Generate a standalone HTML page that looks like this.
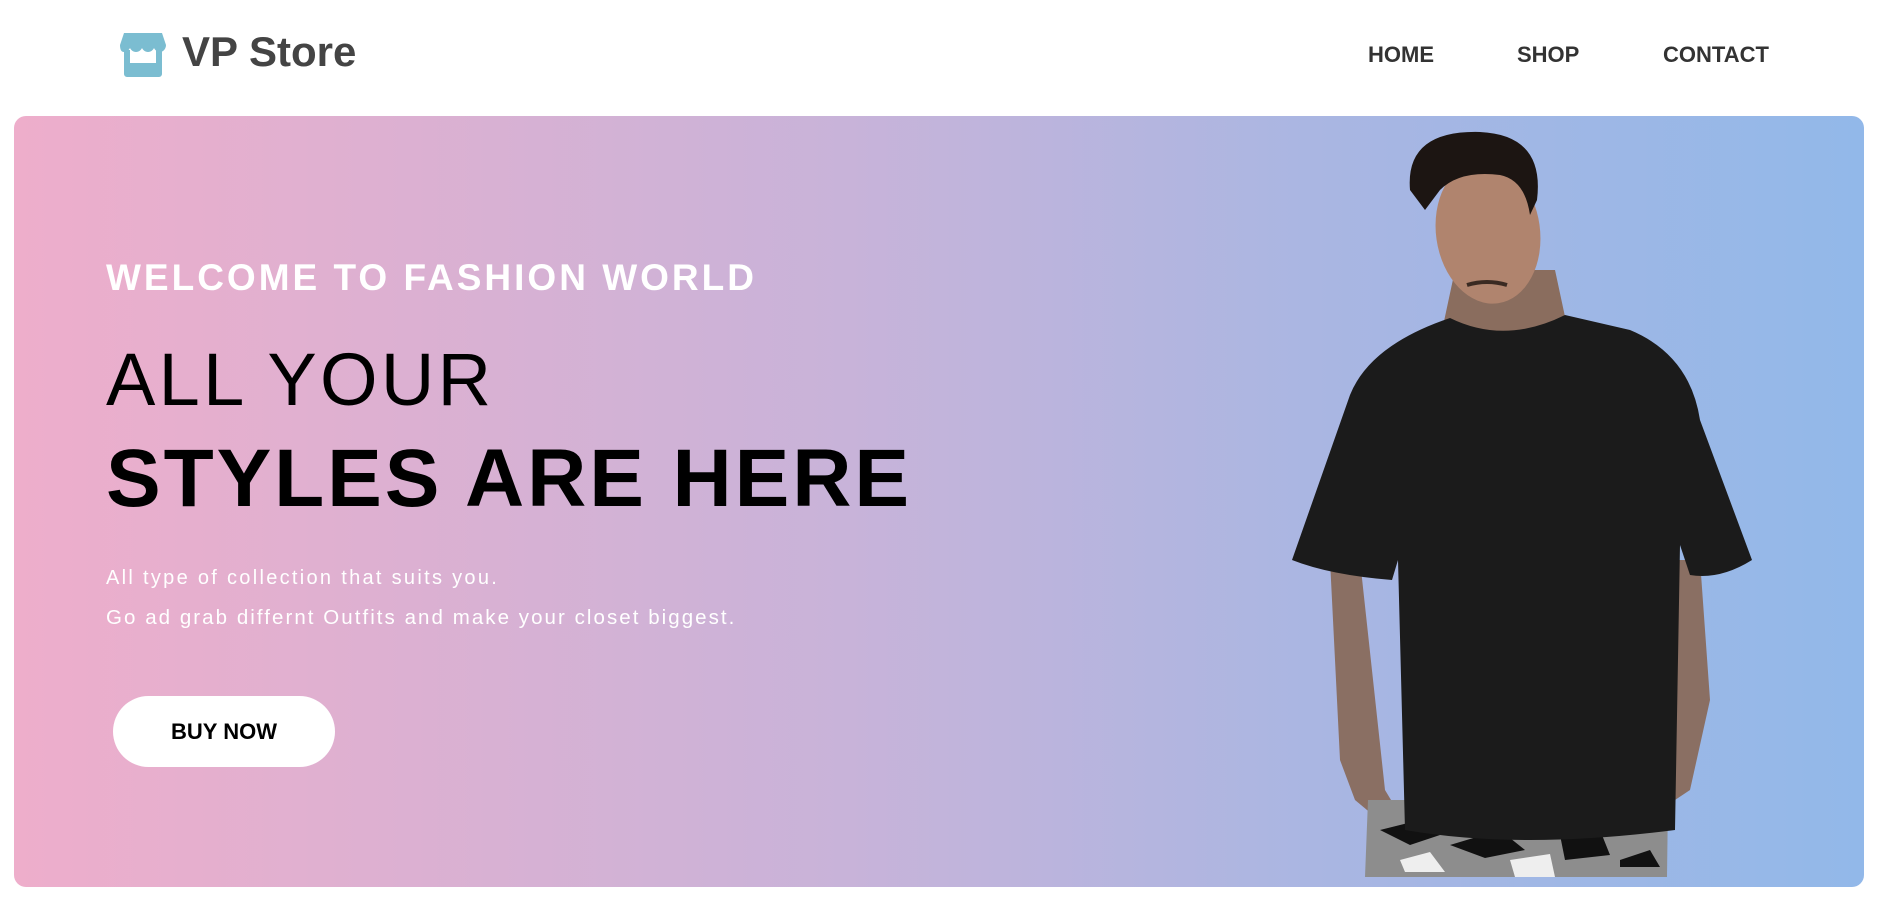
<!DOCTYPE html>
<html><head><meta charset="utf-8"><style>
*{margin:0;padding:0;box-sizing:border-box}
body{width:1888px;height:904px;background:#fff;font-family:"Liberation Sans",Arial,sans-serif;position:relative;overflow:hidden}
.logo{position:absolute;left:120px;top:33px}
.brand{position:absolute;left:182px;top:28px;font-size:42px;font-weight:bold;color:#444}
.nav{position:absolute;top:42px;font-size:22px;font-weight:bold;color:#333}
.hero{position:absolute;left:14px;top:116px;width:1850px;height:771px;border-radius:12px;background:linear-gradient(90deg,#eeaecb 0%,#c8b3d9 45%,#aab6e2 70%,#92b8e9 100%);overflow:hidden}
.t{position:absolute;left:106px;white-space:nowrap}
</style></head><body>
<svg class="logo" width="46" height="44" viewBox="0 0 46 44">
<path d="M4 0h38l4 12c0 4-3 7-6 7s-5-2-6-4c-1 2-3 4-6 4s-5-2-6-4c-1 2-3 4-6 4s-5-2-6-4c-1 2-3 4-6 4S0 16 0 12z" fill="#7bbdd1"/>
<path d="M4 17v24a3 3 0 0 0 3 3h32a3 3 0 0 0 3-3V17h-6v13H10V17z" fill="#7bbdd1"/>
</svg>
<div class="brand">VP Store</div>
<div class="nav" style="left:1368px">HOME</div>
<div class="nav" style="left:1517px">SHOP</div>
<div class="nav" style="left:1663px">CONTACT</div>
<div class="hero"></div>
<div class="t" style="top:257px;font-size:37px;font-weight:bold;color:#fff;letter-spacing:3px">WELCOME TO FASHION WORLD</div>
<div class="t" style="top:337px;font-size:74px;color:#000;letter-spacing:3.3px">ALL YOUR</div>
<div class="t" style="top:432px;font-size:82px;font-weight:bold;color:#000;letter-spacing:2.9px">STYLES ARE HERE</div>
<div class="t" style="top:567px;font-size:20px;color:#fff;letter-spacing:2.3px">All type of collection that suits you.</div>
<div class="t" style="top:606px;font-size:20.5px;color:#fff;letter-spacing:2.05px">Go ad grab differnt Outfits and make your closet biggest.</div>
<div style="position:absolute;left:113px;top:696px;width:222px;height:71px;border-radius:36px;background:#fff;font-size:22px;font-weight:bold;color:#000;text-align:center;line-height:71px">BUY NOW</div>
<svg style="position:absolute;left:0;top:0" width="1888" height="904">
<path d="M1330 560 L1360 560 L1385 790 L1400 815 L1385 825 L1355 800 L1340 760 Z" fill="#8a6f63"/>
<path d="M1665 560 L1700 560 L1710 700 L1690 790 L1660 810 L1645 795 L1665 770 Z" fill="#8a6f63"/>
<path d="M1368 800 L1668 800 L1667 877 L1365 877 Z" fill="#8d8d8d"/>
<path d="M1380 830 l40-10 20 15-30 10z M1450 845 l50-15 25 20-40 8z M1560 835 l40-5 10 25-45 5z M1620 860 l30-10 10 17h-40z" fill="#111"/>
<path d="M1400 860 l30-8 15 20h-40z M1510 860 l40-6 5 23h-40z M1600 815 l30 0 5 15-30 2z" fill="#eee"/>
<path d="M1455 270 L1555 270 L1570 340 L1440 340 Z" fill="#8a6d5e"/>
<path d="M1450 318 Q1505 345 1565 315 L1630 330 Q1690 355 1700 420 L1752 560 Q1720 580 1690 575 L1680 545 L1675 830 Q1520 850 1405 830 L1398 560 L1392 580 Q1330 575 1292 560 L1350 395 Q1370 345 1450 318 Z" fill="#1b1b1b"/>
<ellipse cx="1488" cy="232" rx="52" ry="72" fill="#b0846e" transform="rotate(-8 1488 232)"/>
<path d="M1410 190 Q1405 130 1480 132 Q1545 135 1537 200 L1530 215 Q1525 180 1500 175 Q1460 170 1440 190 L1425 210 Z" fill="#1c1512"/>
<path d="M1467 285 q20 -6 40 0" stroke="#3a2a22" stroke-width="4" fill="none"/>
</svg>
</body></html>
